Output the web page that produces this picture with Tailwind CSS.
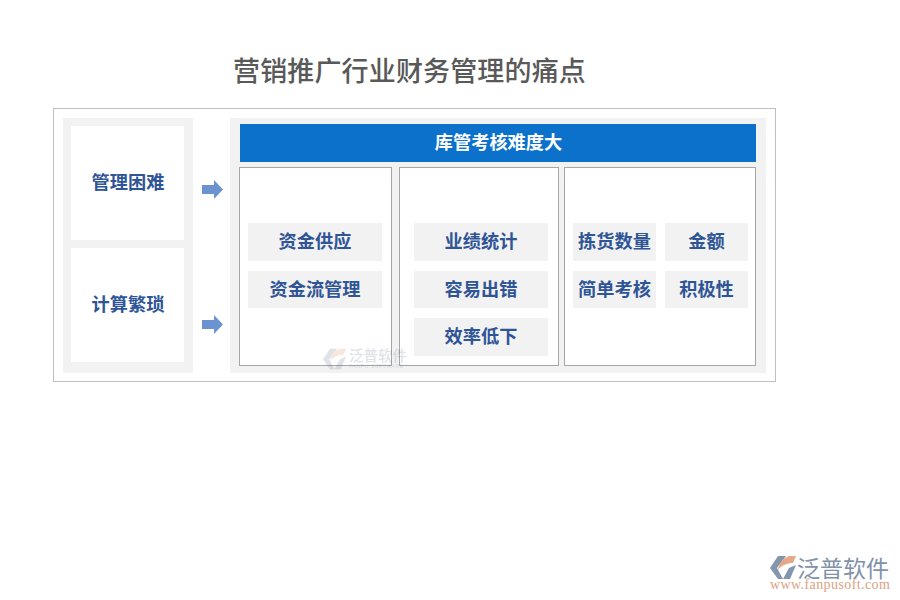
<!DOCTYPE html>
<html lang="zh">
<head>
    <meta charset="UTF-8">
    <title>营销推广行业财务管理的痛点</title>
    <script src="https://cdn.jsdelivr.net/npm/@tailwindcss/browser@4"></script>
</head>
<body class="bg-white">
    <div class="relative w-[900px] h-[600px] overflow-hidden font-['Noto_Sans_CJK_SC',sans-serif]">
        <h1 class="h-[108px] pt-[51px] pl-[233px] text-[27px] leading-[38px] font-medium text-[#595959] tracking-[0.15px]">营销推广行业财务管理的痛点</h1>

        <div class="relative flex ml-[53px] w-[723px] h-[274px] p-[9px] border border-[#bfbfbf]">
            <!-- left column -->
            <div class="flex flex-col gap-[8px] w-[130px] h-[255px] p-[8px] pr-[9px] bg-[#f2f2f2]">
                <div class="flex items-center justify-center h-[114px] pb-[3px] pl-[1px] bg-white text-[18.2px] font-bold text-[#2f5597]">管理困难</div>
                <div class="flex items-center justify-center h-[114px] pb-[3px] pl-[1px] bg-white text-[18.2px] font-bold text-[#2f5597]">计算繁琐</div>
            </div>

            <!-- arrows -->
            <div class="flex flex-col w-[37px] pl-[9px] pt-[62px] gap-[116px]">
                <svg class="w-[21px] h-[19px]" viewBox="0 0 21 19"><path d="M0 5h12V0l9 9.5-9 9.5v-5H0z" fill="#6b93d0"/></svg>
                <svg class="w-[21px] h-[19px]" viewBox="0 0 21 19"><path d="M0 5h12V0l9 9.5-9 9.5v-5H0z" fill="#6b93d0"/></svg>
            </div>

            <!-- right panel -->
            <div class="w-[536px] h-[255px] pt-[6px] pl-[9px] bg-[#f2f2f2]">
                <div class="flex items-center justify-center ml-[1px] w-[516px] h-[38px] pb-[3px] pl-[1px] bg-[#0b71cb] text-[18.2px] font-bold text-white">库管考核难度大</div>
                <div class="flex mt-[5px] h-[199px] text-[18.2px] font-bold text-[#2f5597]">
                    <div class="w-[153px] pt-[55px] pl-[8px] bg-white border border-[#a6a6a6]">
                        <div class="flex flex-col gap-[10px] w-[134px]">
                            <div class="flex items-center justify-center h-[38px] pb-[3px] bg-[#f2f2f2]">资金供应</div>
                            <div class="flex items-center justify-center h-[37px] pb-[2px] bg-[#f2f2f2]">资金流管理</div>
                        </div>
                    </div>
                    <div class="w-[160px] ml-[7px] pt-[55px] pl-[14px] bg-white border border-[#a6a6a6]">
                        <div class="flex flex-col gap-[10px] w-[134px]">
                            <div class="flex items-center justify-center h-[38px] pb-[3px] bg-[#f2f2f2]">业绩统计</div>
                            <div class="flex items-center justify-center h-[37px] pb-[2px] bg-[#f2f2f2]">容易出错</div>
                            <div class="flex items-center justify-center h-[38px] pb-[3px] bg-[#f2f2f2]">效率低下</div>
                        </div>
                    </div>
                    <div class="w-[192px] ml-[5px] pt-[55px] pl-[8px] bg-white border border-[#a6a6a6]">
                        <div class="grid grid-cols-[83px_83px] grid-rows-[38px_37px] gap-x-[9px] gap-y-[10px]">
                            <div class="flex items-center justify-center pb-[3px] bg-[#f2f2f2]">拣货数量</div>
                            <div class="flex items-center justify-center pb-[3px] bg-[#f2f2f2]">金额</div>
                            <div class="flex items-center justify-center pb-[2px] bg-[#f2f2f2]">简单考核</div>
                            <div class="flex items-center justify-center pb-[2px] bg-[#f2f2f2]">积极性</div>
                        </div>
                    </div>
                </div>
            </div>
        </div>

        <!-- watermark -->
        <div class="absolute left-[323px] top-[346px] flex items-start gap-[3px] opacity-20">
            <svg class="w-[23px] h-[24px] mt-[1px]" viewBox="0 0 26 25">
                <path d="M8 1h8L7 13l6 11H8L0 13z" fill="#64748b"/>
                <path d="M8 15C9 8 13 3 19 1h7l-3 7c-6 0-11 2-15 7z" fill="#e08a5c"/>
                <path d="M13 24l6-11 7-3-6 14z" fill="#64748b"/>
            </svg>
            <div class="flex flex-col">
                <span class="text-[14.5px] leading-[17px] font-medium text-[#64748b]">泛普软件</span>
                <span class="text-[5px] leading-[6px] font-['Liberation_Sans',sans-serif] tracking-[0.6px] text-[#64748b] whitespace-nowrap">FANPU SOFTWARE</span>
            </div>
        </div>

        <!-- logo -->
        <div class="absolute left-[770px] top-[555px] w-[125px]">
            <div class="flex items-start h-[24px] gap-[1px]">
                <svg class="w-[26px] h-[25px] shrink-0" viewBox="0 0 26 25">
                    <path d="M8 1h8L7 13l6 11H8L0 13z" fill="#8496ad"/>
                    <path d="M8 15C9 8 13 3 19 1h7l-3 7c-6 0-11 2-15 7z" fill="#e5a988"/>
                    <path d="M13 24l6-11 7-3-6 14z" fill="#8496ad"/>
                </svg>
                <span class="text-[23px] leading-[24px] text-[#7f92aa]">泛普软件</span>
            </div>
            <div class="font-['Liberation_Serif',serif] text-[14px] leading-[12px] tracking-[0.4px] text-[#dba183] whitespace-nowrap">www.fanpusoft.com</div>
        </div>
    </div>
</body>
</html>
